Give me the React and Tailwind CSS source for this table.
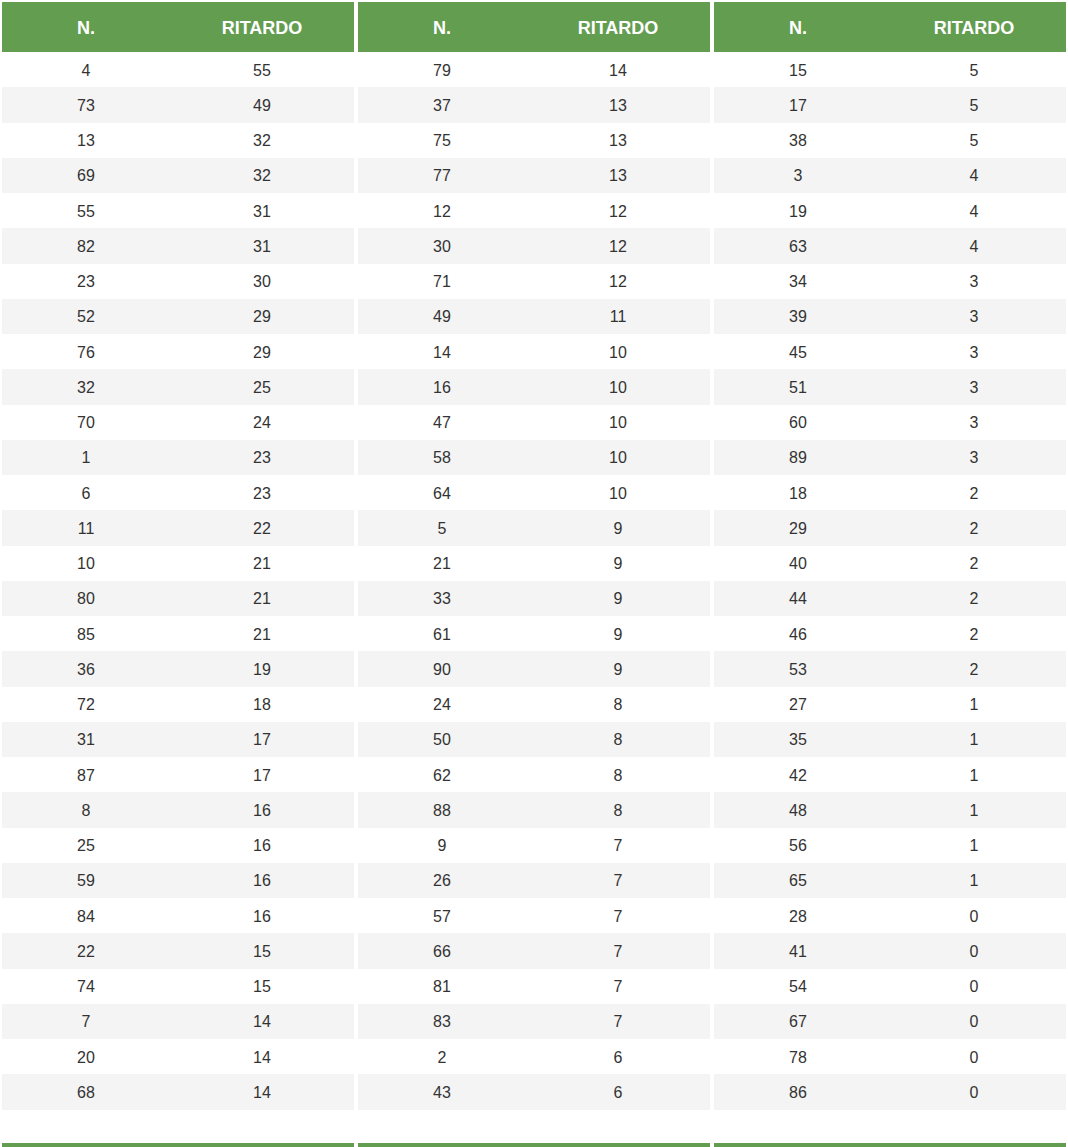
const cols = [
  [[4,55],[73,49],[13,32],[69,32],[55,31],[82,31],[23,30],[52,29],[76,29],[32,25],[70,24],[1,23],[6,23],[11,22],[10,21],[80,21],[85,21],[36,19],[72,18],[31,17],[87,17],[8,16],[25,16],[59,16],[84,16],[22,15],[74,15],[7,14],[20,14],[68,14]],
  [[79,14],[37,13],[75,13],[77,13],[12,12],[30,12],[71,12],[49,11],[14,10],[16,10],[47,10],[58,10],[64,10],[5,9],[21,9],[33,9],[61,9],[90,9],[24,8],[50,8],[62,8],[88,8],[9,7],[26,7],[57,7],[66,7],[81,7],[83,7],[2,6],[43,6]],
  [[15,5],[17,5],[38,5],[3,4],[19,4],[63,4],[34,3],[39,3],[45,3],[51,3],[60,3],[89,3],[18,2],[29,2],[40,2],[44,2],[46,2],[53,2],[27,1],[35,1],[42,1],[48,1],[56,1],[65,1],[28,0],[41,0],[54,0],[67,0],[78,0],[86,0]],
];

function Header() {
  return (
    <div className="flex h-[50.5px] bg-[#639d50] text-white font-bold text-[18px] items-center pt-[3px]">
      <div className="w-[168px] text-center">N.</div>
      <div className="flex-1 text-center">RITARDO</div>
    </div>
  );
}

function Table({ rows }) {
  return (
    <div className="flex flex-col">
      <Header />
      {rows.map(([n, r], i) => (
        <div
          key={i}
          className={
            "flex h-[35.25px] items-center pt-[1.5px] text-[16px] text-[#333333] " +
            (i % 2 === 1 ? "bg-[#f4f4f4]" : "bg-white")
          }
        >
          <div className="w-[168px] text-center">{n}</div>
          <div className="flex-1 text-center">{r}</div>
        </div>
      ))}
    </div>
  );
}

export default function App() {
  return (
    <div
      className="w-[1068px] bg-white pt-[1.7px]"
      style={{ fontFamily: '"Liberation Sans", Arial, sans-serif' }}
    >
      <div className="grid grid-cols-3">
        {cols.map((rows, i) => (
          <div key={i} className="px-[2px]">
            <Table rows={rows} />
          </div>
        ))}
      </div>
      <div className="grid grid-cols-3 mt-[33px]">
        {[0, 1, 2].map((i) => (
          <div key={i} className="px-[2px]">
            <div className="h-[50.5px] bg-[#639d50]" />
          </div>
        ))}
      </div>
    </div>
  );
}
